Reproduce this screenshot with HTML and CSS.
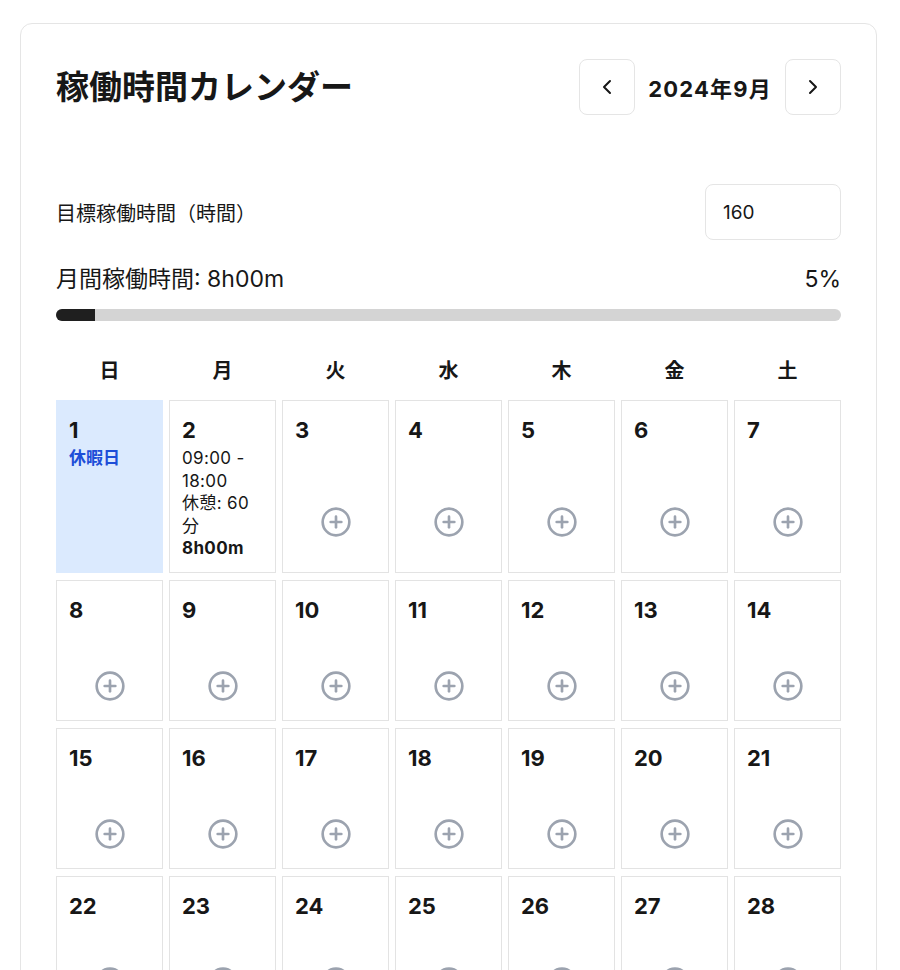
FILE: index.html
```html
<!DOCTYPE html>
<html lang="ja">
<head>
<meta charset="utf-8">
<title>稼働時間カレンダー</title>
<link rel="stylesheet" href="styles.css">
</head>
<body>
<div class="card">
  <div class="header">
    <h1 class="title">稼働時間カレンダー</h1>
    <div class="nav">
      <button class="nav-btn" aria-label="前の月">
        <svg width="24" height="24" viewBox="0 0 24 24" fill="none" stroke="currentColor" stroke-width="2" stroke-linecap="round" stroke-linejoin="round"><path d="m15 18-6-6 6-6"/></svg>
      </button>
      <span class="month">2024年9月</span>
      <button class="nav-btn" aria-label="次の月">
        <svg width="24" height="24" viewBox="0 0 24 24" fill="none" stroke="currentColor" stroke-width="2" stroke-linecap="round" stroke-linejoin="round"><path d="m9 18 6-6-6-6"/></svg>
      </button>
    </div>
  </div>

  <div class="target-row">
    <label class="target-label" for="target">目標稼働時間（時間）</label>
    <input id="target" class="target-input" type="text" value="160">
  </div>

  <div class="stat-row">
    <span>月間稼働時間: 8h00m</span>
    <span>5%</span>
  </div>
  <div class="progress"><div class="progress-fill" style="width:5%"></div></div>

  <div class="weekdays">
    <div>日</div><div>月</div><div>火</div><div>水</div><div>木</div><div>金</div><div>土</div>
  </div>

  <div class="grid">
    <div class="day holiday">
      <div class="day-num">1</div>
      <div class="holiday-label">休暇日</div>
    </div>
    <div class="day">
      <div class="day-num">2</div>
      <div class="day-detail">
        <div>09:00 - 18:00</div>
        <div>休憩: 60分</div>
        <div class="day-total">8h00m</div>
      </div>
    </div>
    <div class="day"><div class="day-num">3</div><div class="day-add"><svg class="plus" width="32" height="32" viewBox="0 0 24 24" fill="none" stroke="currentColor" stroke-width="2" stroke-linecap="round" stroke-linejoin="round"><circle cx="12" cy="12" r="10"/><path d="M8 12h8"/><path d="M12 8v8"/></svg></div></div>
    <div class="day"><div class="day-num">4</div><div class="day-add"><svg class="plus" width="32" height="32" viewBox="0 0 24 24" fill="none" stroke="currentColor" stroke-width="2" stroke-linecap="round" stroke-linejoin="round"><circle cx="12" cy="12" r="10"/><path d="M8 12h8"/><path d="M12 8v8"/></svg></div></div>
    <div class="day"><div class="day-num">5</div><div class="day-add"><svg class="plus" width="32" height="32" viewBox="0 0 24 24" fill="none" stroke="currentColor" stroke-width="2" stroke-linecap="round" stroke-linejoin="round"><circle cx="12" cy="12" r="10"/><path d="M8 12h8"/><path d="M12 8v8"/></svg></div></div>
    <div class="day"><div class="day-num">6</div><div class="day-add"><svg class="plus" width="32" height="32" viewBox="0 0 24 24" fill="none" stroke="currentColor" stroke-width="2" stroke-linecap="round" stroke-linejoin="round"><circle cx="12" cy="12" r="10"/><path d="M8 12h8"/><path d="M12 8v8"/></svg></div></div>
    <div class="day"><div class="day-num">7</div><div class="day-add"><svg class="plus" width="32" height="32" viewBox="0 0 24 24" fill="none" stroke="currentColor" stroke-width="2" stroke-linecap="round" stroke-linejoin="round"><circle cx="12" cy="12" r="10"/><path d="M8 12h8"/><path d="M12 8v8"/></svg></div></div>

    <div class="day"><div class="day-num">8</div><div class="day-add"><svg class="plus" width="32" height="32" viewBox="0 0 24 24" fill="none" stroke="currentColor" stroke-width="2" stroke-linecap="round" stroke-linejoin="round"><circle cx="12" cy="12" r="10"/><path d="M8 12h8"/><path d="M12 8v8"/></svg></div></div>
    <div class="day"><div class="day-num">9</div><div class="day-add"><svg class="plus" width="32" height="32" viewBox="0 0 24 24" fill="none" stroke="currentColor" stroke-width="2" stroke-linecap="round" stroke-linejoin="round"><circle cx="12" cy="12" r="10"/><path d="M8 12h8"/><path d="M12 8v8"/></svg></div></div>
    <div class="day"><div class="day-num">10</div><div class="day-add"><svg class="plus" width="32" height="32" viewBox="0 0 24 24" fill="none" stroke="currentColor" stroke-width="2" stroke-linecap="round" stroke-linejoin="round"><circle cx="12" cy="12" r="10"/><path d="M8 12h8"/><path d="M12 8v8"/></svg></div></div>
    <div class="day"><div class="day-num">11</div><div class="day-add"><svg class="plus" width="32" height="32" viewBox="0 0 24 24" fill="none" stroke="currentColor" stroke-width="2" stroke-linecap="round" stroke-linejoin="round"><circle cx="12" cy="12" r="10"/><path d="M8 12h8"/><path d="M12 8v8"/></svg></div></div>
    <div class="day"><div class="day-num">12</div><div class="day-add"><svg class="plus" width="32" height="32" viewBox="0 0 24 24" fill="none" stroke="currentColor" stroke-width="2" stroke-linecap="round" stroke-linejoin="round"><circle cx="12" cy="12" r="10"/><path d="M8 12h8"/><path d="M12 8v8"/></svg></div></div>
    <div class="day"><div class="day-num">13</div><div class="day-add"><svg class="plus" width="32" height="32" viewBox="0 0 24 24" fill="none" stroke="currentColor" stroke-width="2" stroke-linecap="round" stroke-linejoin="round"><circle cx="12" cy="12" r="10"/><path d="M8 12h8"/><path d="M12 8v8"/></svg></div></div>
    <div class="day"><div class="day-num">14</div><div class="day-add"><svg class="plus" width="32" height="32" viewBox="0 0 24 24" fill="none" stroke="currentColor" stroke-width="2" stroke-linecap="round" stroke-linejoin="round"><circle cx="12" cy="12" r="10"/><path d="M8 12h8"/><path d="M12 8v8"/></svg></div></div>

    <div class="day"><div class="day-num">15</div><div class="day-add"><svg class="plus" width="32" height="32" viewBox="0 0 24 24" fill="none" stroke="currentColor" stroke-width="2" stroke-linecap="round" stroke-linejoin="round"><circle cx="12" cy="12" r="10"/><path d="M8 12h8"/><path d="M12 8v8"/></svg></div></div>
    <div class="day"><div class="day-num">16</div><div class="day-add"><svg class="plus" width="32" height="32" viewBox="0 0 24 24" fill="none" stroke="currentColor" stroke-width="2" stroke-linecap="round" stroke-linejoin="round"><circle cx="12" cy="12" r="10"/><path d="M8 12h8"/><path d="M12 8v8"/></svg></div></div>
    <div class="day"><div class="day-num">17</div><div class="day-add"><svg class="plus" width="32" height="32" viewBox="0 0 24 24" fill="none" stroke="currentColor" stroke-width="2" stroke-linecap="round" stroke-linejoin="round"><circle cx="12" cy="12" r="10"/><path d="M8 12h8"/><path d="M12 8v8"/></svg></div></div>
    <div class="day"><div class="day-num">18</div><div class="day-add"><svg class="plus" width="32" height="32" viewBox="0 0 24 24" fill="none" stroke="currentColor" stroke-width="2" stroke-linecap="round" stroke-linejoin="round"><circle cx="12" cy="12" r="10"/><path d="M8 12h8"/><path d="M12 8v8"/></svg></div></div>
    <div class="day"><div class="day-num">19</div><div class="day-add"><svg class="plus" width="32" height="32" viewBox="0 0 24 24" fill="none" stroke="currentColor" stroke-width="2" stroke-linecap="round" stroke-linejoin="round"><circle cx="12" cy="12" r="10"/><path d="M8 12h8"/><path d="M12 8v8"/></svg></div></div>
    <div class="day"><div class="day-num">20</div><div class="day-add"><svg class="plus" width="32" height="32" viewBox="0 0 24 24" fill="none" stroke="currentColor" stroke-width="2" stroke-linecap="round" stroke-linejoin="round"><circle cx="12" cy="12" r="10"/><path d="M8 12h8"/><path d="M12 8v8"/></svg></div></div>
    <div class="day"><div class="day-num">21</div><div class="day-add"><svg class="plus" width="32" height="32" viewBox="0 0 24 24" fill="none" stroke="currentColor" stroke-width="2" stroke-linecap="round" stroke-linejoin="round"><circle cx="12" cy="12" r="10"/><path d="M8 12h8"/><path d="M12 8v8"/></svg></div></div>

    <div class="day"><div class="day-num">22</div><div class="day-add"><svg class="plus" width="32" height="32" viewBox="0 0 24 24" fill="none" stroke="currentColor" stroke-width="2" stroke-linecap="round" stroke-linejoin="round"><circle cx="12" cy="12" r="10"/><path d="M8 12h8"/><path d="M12 8v8"/></svg></div></div>
    <div class="day"><div class="day-num">23</div><div class="day-add"><svg class="plus" width="32" height="32" viewBox="0 0 24 24" fill="none" stroke="currentColor" stroke-width="2" stroke-linecap="round" stroke-linejoin="round"><circle cx="12" cy="12" r="10"/><path d="M8 12h8"/><path d="M12 8v8"/></svg></div></div>
    <div class="day"><div class="day-num">24</div><div class="day-add"><svg class="plus" width="32" height="32" viewBox="0 0 24 24" fill="none" stroke="currentColor" stroke-width="2" stroke-linecap="round" stroke-linejoin="round"><circle cx="12" cy="12" r="10"/><path d="M8 12h8"/><path d="M12 8v8"/></svg></div></div>
    <div class="day"><div class="day-num">25</div><div class="day-add"><svg class="plus" width="32" height="32" viewBox="0 0 24 24" fill="none" stroke="currentColor" stroke-width="2" stroke-linecap="round" stroke-linejoin="round"><circle cx="12" cy="12" r="10"/><path d="M8 12h8"/><path d="M12 8v8"/></svg></div></div>
    <div class="day"><div class="day-num">26</div><div class="day-add"><svg class="plus" width="32" height="32" viewBox="0 0 24 24" fill="none" stroke="currentColor" stroke-width="2" stroke-linecap="round" stroke-linejoin="round"><circle cx="12" cy="12" r="10"/><path d="M8 12h8"/><path d="M12 8v8"/></svg></div></div>
    <div class="day"><div class="day-num">27</div><div class="day-add"><svg class="plus" width="32" height="32" viewBox="0 0 24 24" fill="none" stroke="currentColor" stroke-width="2" stroke-linecap="round" stroke-linejoin="round"><circle cx="12" cy="12" r="10"/><path d="M8 12h8"/><path d="M12 8v8"/></svg></div></div>
    <div class="day"><div class="day-num">28</div><div class="day-add"><svg class="plus" width="32" height="32" viewBox="0 0 24 24" fill="none" stroke="currentColor" stroke-width="2" stroke-linecap="round" stroke-linejoin="round"><circle cx="12" cy="12" r="10"/><path d="M8 12h8"/><path d="M12 8v8"/></svg></div></div>

    <div class="day"><div class="day-num">29</div><div class="day-add"><svg class="plus" width="32" height="32" viewBox="0 0 24 24" fill="none" stroke="currentColor" stroke-width="2" stroke-linecap="round" stroke-linejoin="round"><circle cx="12" cy="12" r="10"/><path d="M8 12h8"/><path d="M12 8v8"/></svg></div></div>
    <div class="day"><div class="day-num">30</div><div class="day-add"><svg class="plus" width="32" height="32" viewBox="0 0 24 24" fill="none" stroke="currentColor" stroke-width="2" stroke-linecap="round" stroke-linejoin="round"><circle cx="12" cy="12" r="10"/><path d="M8 12h8"/><path d="M12 8v8"/></svg></div></div>
  </div>
</div>
</body>
</html>
```

FILE: styles.css
```css
* { box-sizing: border-box; }

html, body {
  margin: 0;
  padding: 0;
  background: #ffffff;
}

body {
  font-family: "Inter", "Noto Sans CJK JP", sans-serif;
  color: #171717;
  padding: 23px 23px 40px 20px;
}

.card {
  width: 857px;
  border: 1px solid #e5e5e5;
  border-radius: 12px;
  padding: 35px;
  background: #fff;
}

.header {
  display: flex;
  align-items: center;
  justify-content: space-between;
  height: 56px;
  margin-bottom: 69px;
}

.title {
  margin: 0;
  font-size: 33px;
  font-weight: 700;
  line-height: 40px;
  color: #171717;
}

.nav {
  display: flex;
  align-items: center;
  gap: 13px;
}

.nav-btn {
  width: 56px;
  height: 56px;
  border: 1px solid #e5e5e5;
  border-radius: 8px;
  background: #fff;
  color: #171717;
  display: flex;
  align-items: center;
  justify-content: center;
  padding: 0;
}

.month {
  font-size: 22px;
  font-weight: 700;
  letter-spacing: 1.2px;
}

.target-row {
  display: flex;
  align-items: center;
  justify-content: space-between;
  height: 56px;
  margin-bottom: 24px;
}

.target-label {
  font-size: 20px;
}

.target-input {
  width: 136px;
  height: 56px;
  border: 1px solid #e5e5e5;
  border-radius: 8px;
  padding: 0 17px;
  font-family: "Inter", "Noto Sans CJK JP", sans-serif;
  font-size: 19px;
  color: #171717;
  background: #fff;
}

.stat-row {
  display: flex;
  justify-content: space-between;
  align-items: center;
  font-size: 23px;
  line-height: 30px;
  margin-bottom: 15px;
}

.progress {
  height: 12px;
  border-radius: 6px;
  background: #d4d4d4;
  overflow: hidden;
}

.progress-fill {
  height: 100%;
  background: #1f1f1f;
}

.weekdays {
  display: grid;
  grid-template-columns: repeat(7, 1fr);
  column-gap: 6px;
  margin-top: 35px;
  margin-bottom: 14px;
  font-size: 20px;
  font-weight: 700;
  line-height: 30px;
  text-align: center;
}

.grid {
  display: grid;
  grid-template-columns: repeat(7, 1fr);
  column-gap: 6px;
  row-gap: 7px;
}

.day {
  min-height: 141px;
  border: 1px solid #e3e3e3;
  padding: 14px 12px 12px;
  display: flex;
  flex-direction: column;
  background: #fff;
}

.day.holiday {
  background: #dbeafe;
  border-color: #dbeafe;
}

.day-num {
  font-size: 22px;
  font-weight: 700;
  line-height: 30px;
}

.holiday-label {
  margin-top: 2px;
  font-size: 17px;
  font-weight: 700;
  line-height: 22.5px;
  color: #1d4ed8;
}

.day-detail {
  margin-top: 2px;
  font-size: 17px;
  line-height: 22.5px;
  letter-spacing: 0.02em;
}

.day-total {
  font-weight: 700;
}

.day-add {
  flex: 1;
  display: flex;
  align-items: center;
  justify-content: center;
  padding-top: 39px;
}

.plus {
  color: #9ca3af;
  display: block;
}
```
